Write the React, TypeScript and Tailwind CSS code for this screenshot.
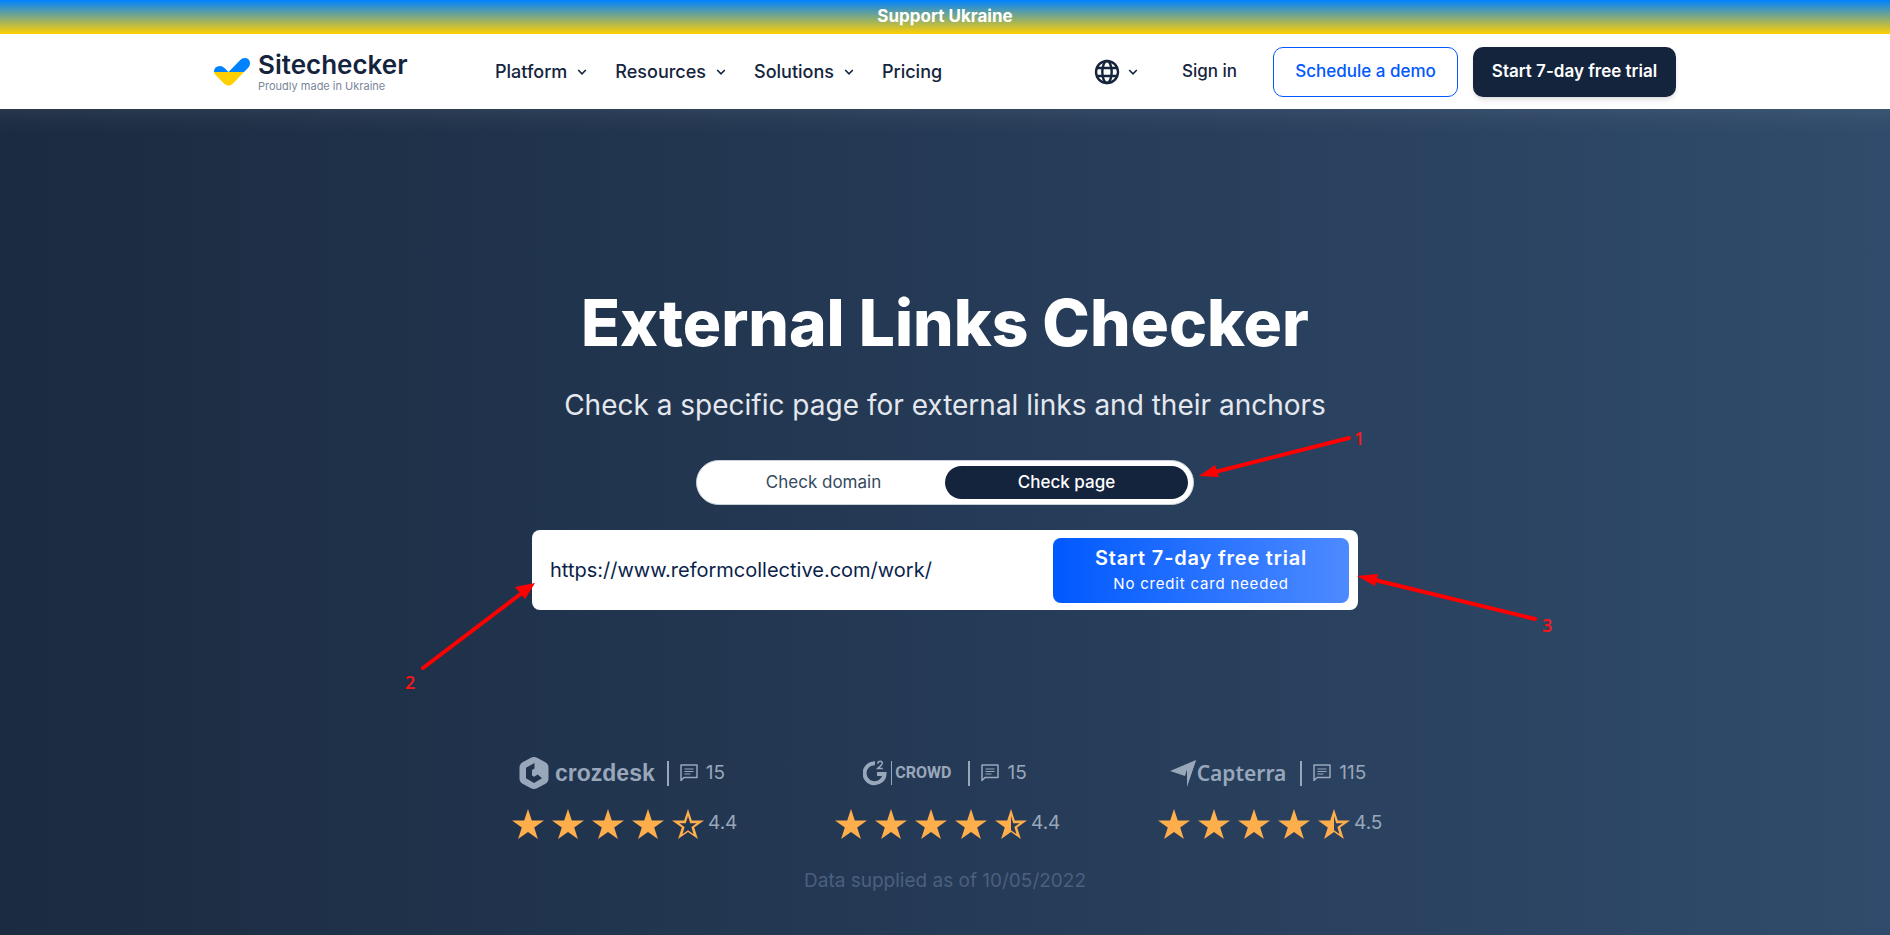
import type { ReactNode } from "react";
import clsx from "clsx";

type Fill = "full" | "half" | "empty";

const STAR = "M16 0l3.8 11.5H32l-9.8 7 3.7 11.5L16 23l-9.9 7 3.7-11.5-9.8-7h12.2z";
const STAR_INNER = "M16 7l2.2 7.2h6.4l-5.2 3.8 2 7.1L16 21.2l-5.4 3.9 2-7.1-5.2-3.8h6.4z";
const STAR_INNER_RIGHT = "M16 7l2.2 7.2h6.4l-5.2 3.8 2 7.1L16 21.2z";

export default function App() {
  return (
    <div className="flex min-h-screen flex-col bg-white font-[Inter,sans-serif] text-[#14243d]">
      <a
        href="#"
        className="flex h-[34px] items-center justify-center bg-linear-to-b/srgb from-[#0082ff] to-[#ffd000] text-[17px] font-bold text-white"
      >
        Support Ukraine
      </a>
      <Header />
      <Hero />
    </div>
  );
}

const Header = () => (
  <header className="h-[75px] px-6">
    <div className="mx-auto flex h-full max-w-[1462px] items-center">
      <a href="#" className="flex w-[281px] shrink-0 items-center gap-2">
        <LogoMark />
        <span className="flex flex-col">
          <span className="text-[26px] leading-7 font-semibold">Sitechecker</span>
          <span className="text-[11px] leading-3.5 text-[#7a869a]">Proudly made in Ukraine</span>
        </span>
      </a>
      <nav className="flex gap-7 text-lg font-medium">
        <NavLink label="Platform" menu />
        <NavLink label="Resources" menu />
        <NavLink label="Solutions" menu />
        <NavLink label="Pricing" />
      </nav>
      <div className="ml-auto flex items-center">
        <button aria-label="Language" className="flex items-center gap-2">
          <Globe />
          <Chevron />
        </button>
        <a href="#" className="mr-9 ml-11 text-[17px] font-medium">Sign in</a>
        <button className="h-[50px] w-[185px] rounded-[10px] border border-[#0059ff] text-[17px] font-medium text-[#0059ff]">
          Schedule a demo
        </button>
        <button className="ml-[15px] h-[50px] w-[203px] rounded-[10px] bg-[#14243d] text-[17px] font-semibold text-white shadow-md">
          Start 7-day free trial
        </button>
      </div>
    </div>
  </header>
);

const NavLink = ({ label, menu }: { label: string; menu?: boolean }) => (
  <a href="#" className="flex items-center gap-2.5">
    {label}
    {menu && <Chevron />}
  </a>
);

const Hero = () => (
  <main className="relative flex flex-1 flex-col items-center overflow-hidden bg-linear-to-r/srgb from-[#1b2b40] via-[#253a56] to-[#304b6b] px-6 pt-[178px] pb-11 shadow-[inset_0_30px_30px_-30px_rgba(255,255,255,0.12)]">
    <h1 className="text-[64px] leading-[72px] font-extrabold text-white">External Links Checker</h1>
    <p className="mt-7 text-[28px] leading-9 text-[#e4e8ee]">
      Check a specific page for external links and their anchors
    </p>

    <div className="mt-[37px] grid h-[45px] w-full max-w-[498px] grid-cols-2 rounded-full border border-[#c9d0da] bg-white p-[5px] text-[17px]">
      <button className="rounded-full text-[#34495e]">Check domain</button>
      <button className="rounded-full bg-[#14243d] font-medium text-white">Check page</button>
    </div>

    <form className="mt-[25px] flex h-20 w-full max-w-[826px] items-center rounded-lg bg-white pr-[9px]">
      <input
        type="url"
        aria-label="Page URL"
        defaultValue="https://www.reformcollective.com/work/"
        className="min-w-0 flex-1 px-[18px] text-xl text-[#0b1f4b] outline-none"
      />
      <button
        type="button"
        className="flex h-[65px] w-[296px] flex-col items-center justify-center rounded-lg bg-linear-to-r/srgb from-[#0059ff] to-[#4d8aff] tracking-wider text-white"
      >
        <span className="text-xl leading-7 font-semibold">Start 7-day free trial</span>
        <span className="text-[15px] leading-6">No credit card needed</span>
      </button>
    </form>

    <div className="mt-[147px] flex gap-[103px]">
      <Review logo={<Crozdesk />} count={15} score="4.4" last="empty" />
      <Review logo={<G2Crowd />} count={15} score="4.4" last="half" />
      <Review logo={<Capterra />} count={115} score="4.5" last="half" />
    </div>
    <p className="mt-7 text-[19px] leading-7 text-[#4a607f]">Data supplied as of 10/05/2022</p>

    <Notes />
  </main>
);

type ReviewProps = { logo: ReactNode; count: number; score: string; last: Fill };

const Review = ({ logo, count, score, last }: ReviewProps) => (
  <div className="w-[220px] text-[19px] text-[#99a7bb]">
    <div className="flex h-8 items-center justify-center">
      {logo}
      <span className="mr-[11px] h-[25px] w-0.5 bg-[#99a7bb]" />
      <CommentIcon />
      <span className="ml-2">{count}</span>
    </div>
    <div className="mt-[19px] flex h-[31px] items-center">
      <div className="flex shrink-0 gap-2">
        <Star fill="full" />
        <Star fill="full" />
        <Star fill="full" />
        <Star fill="full" />
        <Star fill={last} />
      </div>
      <span className="ml-1">{score}</span>
    </div>
  </div>
);

const Star = ({ fill }: { fill: Fill }) => (
  <svg width="32" height="30" viewBox="0 0 32 30" fill="#ffae4c" fillRule="evenodd" aria-hidden>
    <path
      d={clsx(STAR, fill === "empty" && STAR_INNER, fill === "half" && STAR_INNER_RIGHT)}
    />
  </svg>
);

const Crozdesk = () => (
  <span className="mr-3 flex items-center gap-1.5">
    <svg width="30" height="32" viewBox="0 0 30 32" fill="#99a7bb" fillRule="evenodd" aria-hidden>
      <path d="M11.5.9q3.5-1.8 7 0l7.5 4Q29.500 7 29.500 10.500v11q0 3.500-3.500 5.600l-7.500 4q-3.500 1.800-7 0l-7.500-4Q.5 25 .5 21.500v-11Q.5 7 4 4.900zM15.500 6L7 10.800v10.400L15 26l8-4.700-4.300-3.800-3.700 2.300-2-1.200V13l2.500-1.500z" />
    </svg>
    <span className="font-['Liberation_Sans',sans-serif] text-[23px] leading-8 font-bold">crozdesk</span>
  </span>
);

const G2Crowd = () => (
  <span className="mr-[17px] flex items-center">
    <svg width="32" height="26" viewBox="0 0 32 26" fill="none" stroke="#99a7bb" aria-hidden>
      <path strokeWidth="4" d="M12 3.300A10 10 0 1 0 21.500 14H14" />
      <path strokeWidth="1.500" d="M14.700 3.600q.3-2.300 2.400-2.300 2.200 0 2.200 2c0 1.500-1.500 2.300-4.500 5.100h5" />
      <path strokeWidth="1" d="M28.500 1v24" />
    </svg>
    <span className="font-[Roboto,sans-serif] text-base leading-8 font-bold">CROWD</span>
  </span>
);

const Capterra = () => (
  <span className="mr-3.5 flex items-center">
    <svg width="27" height="27" viewBox="0 0 27 27" fill="#99a7bb" aria-hidden>
      <path d="M0 11L26 0 17 26.500V9.500L15 16z" />
      <path d="M17 11v15.500L26 0z" />
    </svg>
    <span className="font-['Noto_Sans',sans-serif] text-[21px] leading-8 font-semibold">Capterra</span>
  </span>
);

const CommentIcon = () => (
  <svg width="18" height="18" viewBox="0 0 18 18" fill="none" stroke="#99a7bb" strokeWidth="1.500" aria-hidden>
    <path d="M1 16.500V1h16v12.500H4z" strokeLinejoin="round" />
    <path d="M4.500 5h9M4.500 7.500h9M4.500 10h6" strokeWidth="1.200" />
  </svg>
);

const LogoMark = () => (
  <svg width="36" height="28" viewBox="0 0 36 28" aria-hidden>
    <path fill="#0082ff" d="M0 14Q0 8 6 8q2.500 0 4.500 2l4 4L26 2.200Q28 0 30.500 0 36 0 36 5.500q0 2.500-2 4.500l-4 4z" />
    <path fill="#ffd000" d="M0 14h30L18.500 26q-4 3-8 0L1.500 17Q0 15.500 0 14z" />
  </svg>
);

const Globe = () => (
  <svg width="26" height="26" viewBox="0 0 26 26" fill="none" stroke="#14243d" strokeWidth="2.400" aria-hidden>
    <circle cx="13" cy="13" r="11" />
    <ellipse cx="13" cy="13" rx="4.700" ry="11" />
    <path d="M3 9h20M3 17h20" />
  </svg>
);

const Chevron = () => (
  <svg width="10" height="10" viewBox="0 0 10 10" fill="none" stroke="#14243d" strokeWidth="1.600" aria-hidden>
    <path d="M1.200 3L5 6.800 8.800 3" />
  </svg>
);

// numbered pointers drawn over the hero
const Notes = () => (
  <div className="pointer-events-none absolute top-0 left-1/2 h-[620px] w-[1190px] -translate-x-1/2 font-['Open_Sans',sans-serif] text-lg leading-6 font-semibold text-[#ff1414]">
    <svg width="1190" height="620" viewBox="0 0 1190 620" fill="#f00" stroke="#f00" aria-hidden>
      <path strokeWidth="4" strokeLinecap="round" d="M999 329L865 363M73 559L172 484M1185 510L1025 471" />
      <path stroke="none" d="M849 367l16-11 4 12zM185 474l-10 16-10-12zM1007 467l21-2-3 12z" />
    </svg>
    <span className="absolute top-[317px] left-[1004px]">1</span>
    <span className="absolute top-[561px] left-[55px]">2</span>
    <span className="absolute top-[504px] left-[1192px]">3</span>
  </div>
);
